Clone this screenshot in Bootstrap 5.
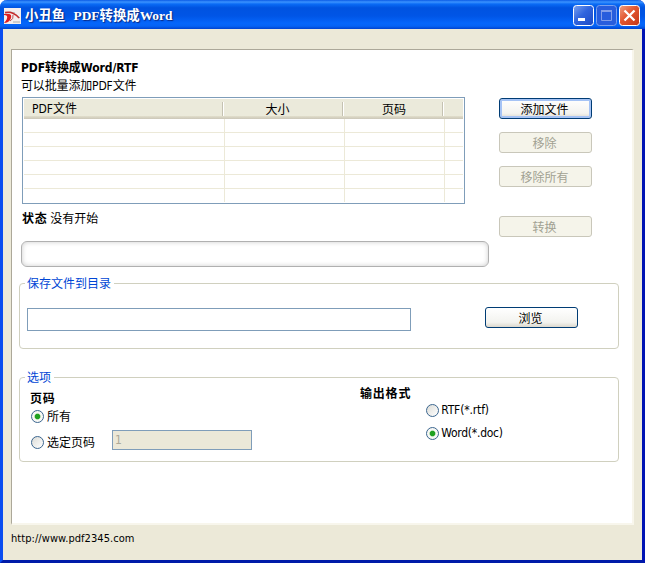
<!DOCTYPE html>
<html lang="zh-CN">
<head>
<meta charset="utf-8">
<title>小丑鱼 PDF转换成Word</title>
<link href="https://cdn.jsdelivr.net/npm/bootstrap@5.3.0/dist/css/bootstrap.min.css" rel="stylesheet">
<style>
body{font:12px/16px "DejaVu Sans Condensed","DejaVu Sans","Noto Sans CJK SC",sans-serif;color:#000;background:#fff;white-space:nowrap}
.zh{font-family:"Noto Sans CJK SC",sans-serif}
.xp-window{width:645px;height:563px;background:#ece9d8;border:solid #0831d9;border-width:0 3px 3px;border-color:#0831d9 #0013b4 #001ba8 #0a4df0;border-radius:7px 7px 0 0}
.xp-title{height:29px;margin:0 -3px;padding:2px 5px 0 4px;border-radius:7px 7px 0 0;background:linear-gradient(#0b5be5 0,#3b93ff 7%,#0a6bf5 14%,#0053e0 27%,#0055e6 55%,#0566fb 80%,#0563f5 90%,#0043cf 100%)}
.xp-name{font:bold 13.4px/27px "Liberation Serif","Noto Sans CJK SC",serif;color:#fff;text-shadow:1px 1px 1px #0b2a83;margin-left:4px;word-spacing:5px}
.controls{gap:2px}
.ctl{width:21px;height:21px;display:block}
.xp-panel{margin:20px 8px 0;height:476px;border:1px solid #aca899;border-right:2px solid #f8f6ec;border-bottom:2px solid #f8f6ec;background:#fff;padding:10px 0 0 7px}
.upper{height:181px}
.upper-main{padding-left:3px}
.heading{line-height:17px;letter-spacing:-.08px;margin-left:-1px}
.subheading{line-height:18px;letter-spacing:-.15px;margin-left:-1px}
.files{width:443px;height:107px;border:1px solid #7f9db9;padding:1px;margin-top:2px}
.files-head{height:20px;line-height:19px;background:linear-gradient(#ebeadb 0 84%,#dcd8c6 88%,#cbc7b8 100%)}
.files-head>div{height:20px;position:relative}
.files-head>.c1{line-height:21px}
.files-head>div:not(:last-child)::after{content:"";position:absolute;right:0;top:3px;width:2px;height:14px;background:linear-gradient(90deg,#c5c2b2 50%,#fff 50%)}
.cell{height:14px;border-right:1px solid #ece9d8;border-bottom:1px solid #ece9d8}
.files-row:last-child .cell{border-bottom:0;height:13px}
.c1{width:200px}.c2{width:120px}.c3{width:100px}
.files-body .c1{width:201px}
.size-head{padding-right:13px}
.state{padding-top:6px}
.side{margin-left:10px;padding-top:38px}
.xp-btn{width:93px;height:21px;padding:0 2px 0 0;border:1px solid #003c74;border-radius:3px;font:12px/18px "Noto Sans CJK SC",sans-serif;color:#000;background:linear-gradient(#fff,#f3f3ef 75%,#dcd8cd);text-align:center;display:block}
.side .xp-btn+.xp-btn{margin-top:13px}
.side .xp-btn:last-child{margin-top:29px!important}
.xp-btn.main{box-shadow:inset 0 0 0 2px #a5c3f5}
.xp-btn:disabled{border-color:#c9c7ba;background:#f5f4ea;color:#a1a192;opacity:1}
.browse{margin:-1px 0 0 74px}
.bar{width:468px;height:26px;margin:15px 0 0 -1px;border:1px solid #b0b0b0;border-radius:6px;background:#fff;box-shadow:inset 0 0 5px 0 #ccc}
.group{width:600px;border:1px solid #d0d0bf;border-radius:4px}
.group>legend{float:none;width:auto;margin:0 0 0 5px;padding:0 3px 0 2px;font-size:12px;line-height:16px;color:#0046d5}
.save-group{height:74px;margin-top:34px}
.save-row{padding:17px 0 0 7px}
.option-group{height:93px;margin-top:20px}
.pages{width:330px;padding-top:5px}
.all-pages{margin:2px 0 0 1px}
.some-pages{margin:6px 0 0 1px}
.some-pages label{width:81px;padding-top:4px}
.strong-zh{letter-spacing:.8px}
.formats{padding:17px 0 0 15px;letter-spacing:-.15px}
.formats .dot{margin-right:2px}
.formats label+label{margin-top:7px;letter-spacing:-.25px}
.field{height:23px;width:384px;border:1px solid #7f9db9;background:#fff;padding:0 2px;border-radius:0;font:12px/18px "DejaVu Sans Condensed",sans-serif}
.field:disabled{background:#ebe8d8;color:#aca899;width:140px;height:20px}
.dot{appearance:none;width:13px;height:13px;margin:0 3px 0 0;flex:none;border:1px solid #3b668f;border-radius:50%;background:linear-gradient(135deg,#dcdcd7,#fff)}
.dot:checked{background:radial-gradient(circle,#21a121 0 2.3px,#b5e0b0 3px,#f8f8f5 3.5px)}
.xp-status{padding:6px 0 0 8px;font-size:11px;letter-spacing:.06px}
</style>
<script src="https://cdn.jsdelivr.net/npm/bootstrap@5.3.0/dist/js/bootstrap.bundle.min.js"></script>
</head>
<body>
<div class="xp-window">
  <header class="xp-title d-flex align-items-center">
    <svg width="17" height="16" viewBox="0 0 17 16"><path fill="#f3eeee" d="M0 0h17v16H0z"/><path d="M1 5l5-1 5 1M11 6l5 4M9 14h7" stroke="#aaa" fill="none"/><path d="M1 4.500Q9 3 15 10" stroke="#c92a2a" stroke-width="1.300" fill="none"/><path d="M0 6q5-1 7 1 1 4-3 7-2 1-4 1 4-4 3-7-1-1-3-1z" fill="#e01d20"/><path d="M6 13q4-2 3-6" fill="none" stroke="#b55"/></svg>
    <div class="xp-name flex-grow-1">小丑鱼 PDF转换成Word</div>
    <div class="controls d-flex">
      <svg class="ctl" viewBox="0 0 21 21"><defs><linearGradient id="b" x2="1" y2="1"><stop stop-color="#7ba2ef"/><stop offset=".45" stop-color="#3165de"/><stop offset="1" stop-color="#1d49c4"/></linearGradient><linearGradient id="r" x2="1" y2="1"><stop stop-color="#f0a083"/><stop offset=".45" stop-color="#e25630"/><stop offset="1" stop-color="#c43616"/></linearGradient></defs><rect x=".5" y=".5" width="20" height="20" rx="3" fill="url(#b)" stroke="#fff"/><path fill="#fff" d="M5 13h7v3H5z"/></svg>
      <svg class="ctl" viewBox="0 0 21 21"><rect x=".5" y=".5" width="20" height="20" rx="3" fill="#285ddd" stroke="#7aa0ef"/><path d="M5.500 6v9.500h10V6" fill="none" stroke="#829eea"/><path d="M5 5h11v2H5z" fill="#829eea"/></svg>
      <svg class="ctl" viewBox="0 0 21 21"><rect x=".5" y=".5" width="20" height="20" rx="3" fill="url(#r)" stroke="#fff"/><path d="m5.500 5.500 10 10m0-10-10 10" stroke="#fff" stroke-width="2.300"/></svg>
    </div>
  </header>
  <main class="xp-panel">
    <div class="upper d-flex">
      <div class="upper-main">
        <div class="heading fw-bold">PDF转换成Word/RTF</div>
        <div class="subheading">可以批量添加PDF文件</div>
        <div class="files">
          <div class="files-head d-flex">
            <div class="c1 ps-2">PDF文件</div><div class="c2 zh text-center size-head">大小</div><div class="c3 zh text-center">页码</div><div class="flex-grow-1"></div>
          </div>
          <div class="files-body">
            <div class="files-row d-flex"><div class="cell c1"></div><div class="cell c2"></div><div class="cell c3"></div><div class="cell border-end-0 flex-grow-1"></div></div>
            <div class="files-row d-flex"><div class="cell c1"></div><div class="cell c2"></div><div class="cell c3"></div><div class="cell border-end-0 flex-grow-1"></div></div>
            <div class="files-row d-flex"><div class="cell c1"></div><div class="cell c2"></div><div class="cell c3"></div><div class="cell border-end-0 flex-grow-1"></div></div>
            <div class="files-row d-flex"><div class="cell c1"></div><div class="cell c2"></div><div class="cell c3"></div><div class="cell border-end-0 flex-grow-1"></div></div>
            <div class="files-row d-flex"><div class="cell c1"></div><div class="cell c2"></div><div class="cell c3"></div><div class="cell border-end-0 flex-grow-1"></div></div>
            <div class="files-row d-flex"><div class="cell c1"></div><div class="cell c2"></div><div class="cell c3"></div><div class="cell border-end-0 flex-grow-1"></div></div>
          </div>
        </div>
        <div class="state zh"><b class="strong-zh">状态</b> 没有开始</div>
        <div class="bar"></div>
      </div>
      <div class="side">
        <button class="xp-btn main">添加文件</button>
        <button class="xp-btn" disabled>移除</button>
        <button class="xp-btn" disabled>移除所有</button>
        <button class="xp-btn" disabled>转换</button>
      </div>
    </div>
    <fieldset class="group save-group">
      <legend class="zh">保存文件到目录</legend>
      <div class="save-row d-flex align-items-start">
        <input class="field"><button class="xp-btn browse">浏览</button>
      </div>
    </fieldset>
    <fieldset class="group option-group">
      <legend class="zh">选项</legend>
      <div class="d-flex" style="padding-left:10px">
        <div class="pages">
          <div class="zh fw-bold strong-zh">页码</div>
          <label class="all-pages zh d-flex align-items-center"><input type="radio" name="pages" class="dot" checked>所有</label>
          <div class="some-pages d-flex align-items-start">
            <label class="zh d-flex align-items-center"><input type="radio" name="pages" class="dot">选定页码</label>
            <input class="field" value="1" disabled>
          </div>
        </div>
        <div class="zh fw-bold strong-zh">输出格式</div>
        <div class="formats">
          <label class="d-flex align-items-center"><input type="radio" name="fmt" class="dot">RTF(*.rtf)</label>
          <label class="d-flex align-items-center"><input type="radio" name="fmt" class="dot" checked>Word(*.doc)</label>
        </div>
      </div>
    </fieldset>
  </main>
  <footer class="xp-status">http://www.pdf2345.com</footer>
</div>
</body>
</html>
